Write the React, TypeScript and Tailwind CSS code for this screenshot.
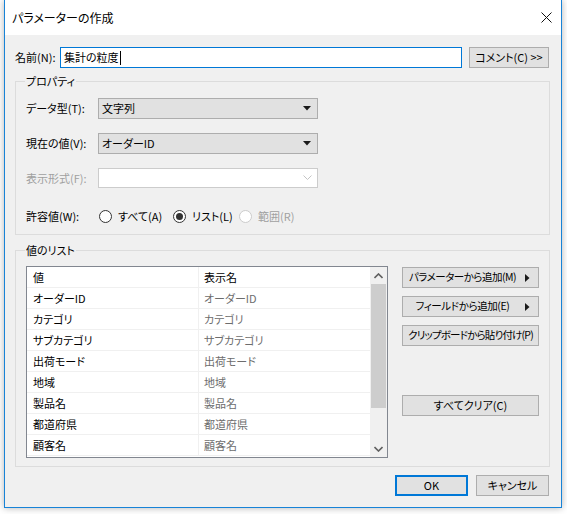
import React from 'react'

const rows = ['オーダーID', 'カテゴリ', 'サブカテゴリ', '出荷モード', '地域', '製品名', '都道府県', '顧客名']

function Combo({ value, disabled }: { value?: string; disabled?: boolean }) {
  return (
    <div
      className={
        disabled
          ? 'flex h-[20px] w-[220px] items-center justify-between border border-[#cccccc] bg-white pl-[3px] pr-[5px]'
          : 'flex h-[21px] w-[220px] items-center justify-between border border-[#adadad] bg-[#e1e1e1] pl-[3px] pr-[6px]'
      }
    >
      <span className="leading-none">{value}</span>
      {disabled ? (
        <svg width="9" height="6" viewBox="0 0 9 6">
          <path d="M0.5 0.5 L4.5 4.5 L8.5 0.5" fill="none" stroke="#c4c4c4" strokeWidth="1" />
        </svg>
      ) : (
        <svg width="8" height="5" viewBox="0 0 8 5">
          <path d="M0 0 H8 L4 4.5 Z" fill="#1a1a1a" />
        </svg>
      )}
    </div>
  )
}

function Radio({ label, checked, disabled }: { label: string; checked?: boolean; disabled?: boolean }) {
  return (
    <div className={`flex items-center gap-[6px] whitespace-nowrap ${disabled ? 'text-[#a0a0a0]' : 'text-black'}`}>
      <span
        className={`flex h-[13px] w-[13px] flex-none items-center justify-center rounded-full border bg-white ${
          disabled ? 'border-[#cccccc]' : 'border-[#333333]'
        }`}
      >
        {checked && <span className="h-[7px] w-[7px] rounded-full bg-[#333333]" />}
      </span>
      <span>{label}</span>
    </div>
  )
}

function Button({
  children,
  arrow,
  className = '',
  textClass = '',
}: {
  children: React.ReactNode
  arrow?: boolean
  className?: string
  textClass?: string
}) {
  return (
    <div
      className={`relative flex h-[21px] items-center justify-center whitespace-nowrap border border-[#adadad] bg-[#e1e1e1] ${
        arrow ? 'pr-[16px]' : ''
      } ${className}`}
    >
      <span className={`leading-none ${textClass}`}>{children}</span>
      {arrow && (
        <svg className="absolute right-[8px] top-[6px]" width="5" height="8" viewBox="0 0 5 8">
          <path d="M0 0 L4.5 4 L0 8 Z" fill="#1a1a1a" />
        </svg>
      )}
    </div>
  )
}

export default function App() {
  return (
    <div className="h-[514px] w-[567px] overflow-hidden bg-white text-[11px] text-black [font-family:'Noto_Sans_CJK_JP','Noto_Sans',sans-serif] [font-feature-settings:'palt']">
      <div className="ml-[4px] flex h-[508px] w-[558px] flex-col border-x border-b border-[#1883d7] bg-[#f0f0f0] shadow-[0_0_7px_rgba(0,0,0,0.3)]">
        {/* title bar */}
        <div className="flex h-[35px] items-center justify-between bg-white pl-[7px] pr-[9px]">
          <span className="text-[12px]">パラメーターの作成</span>
          <svg width="11" height="11" viewBox="0 0 11 11">
            <path d="M0.5 0.5 L10.5 10.5 M10.5 0.5 L0.5 10.5" stroke="#111" strokeWidth="1" />
          </svg>
        </div>

        <div className="flex flex-col pl-[10px] pr-[11px] pt-[12px]">
          {/* name row */}
          <div className="flex h-[21px] items-center">
            <span className="w-[45px] whitespace-nowrap">名前(N):</span>
            <div className="flex h-[21px] w-[402px] items-center border border-[#0078d7] bg-white pl-[3px]">
              <span className="leading-none">集計の粒度</span>
              <span className="ml-[1px] h-[14px] w-px bg-black" />
            </div>
            <Button className="ml-[7px] w-[80px]">コメント(C) &gt;&gt;</Button>
          </div>

          {/* properties */}
          <fieldset className="mt-[5px] border border-[#dcdcdc] pb-[7px]">
            <legend className="ml-[9px] px-[1px] leading-[16px]">プロパティ</legend>
            <div className="mt-[9px] flex flex-col pl-[10px]">
              <div className="flex items-center">
                <span className="w-[72px] whitespace-nowrap">データ型(T):</span>
                <Combo value="文字列" />
              </div>
              <div className="mt-[14px] flex items-center">
                <span className="w-[72px] whitespace-nowrap">現在の値(V):</span>
                <Combo value="オーダーID" />
              </div>
              <div className="mt-[14px] flex items-center">
                <span className="w-[72px] whitespace-nowrap text-[#a0a0a0]">表示形式(F):</span>
                <Combo disabled />
              </div>
              <div className="mt-[18px] flex h-[21px] items-center">
                <span className="w-[73px] flex-none whitespace-nowrap">許容値(W):</span>
                <div className="flex w-[74px] flex-none">
                  <Radio label="すべて(A)" />
                </div>
                <div className="flex w-[66px] flex-none">
                  <Radio label="リスト(L)" checked />
                </div>
                <Radio label="範囲(R)" disabled />
              </div>
            </div>
          </fieldset>

          {/* list of values */}
          <fieldset className="mt-[7px] border border-[#dcdcdc] pb-[8px]">
            <legend className="ml-[9px] px-[1px] leading-[16px]">値のリスト</legend>
            <div className="mt-[8px] flex px-[10px]">
              <div className="flex h-[192px] w-[362px] border border-[#828790] bg-white">
                <div className="flex w-[343px] flex-col">
                  {[['値', '表示名'], ...rows.map((r) => [r, r])].map(([v, d], i) => (
                    <div key={i} className="flex h-[21px] border-b border-[#f0f0f0]">
                      <div className="flex w-[172px] items-center border-r border-[#f0f0f0] pl-[6px]">{v}</div>
                      <div className={`flex flex-1 items-center pl-[5px] ${i === 0 ? 'text-black' : 'text-[#6d6d6d]'}`}>
                        {d}
                      </div>
                    </div>
                  ))}
                </div>
                {/* scrollbar */}
                <div className="flex w-[17px] flex-col items-center bg-[#f0f0f0]">
                  <div className="flex h-[17px] items-center justify-center">
                    <svg width="9" height="6" viewBox="0 0 9 6">
                      <path d="M0.5 5 L4.5 1 L8.5 5" fill="none" stroke="#606060" strokeWidth="1.6" />
                    </svg>
                  </div>
                  <div className="h-[124px] w-[15px] bg-[#cdcdcd]" />
                  <div className="flex-1" />
                  <div className="flex h-[17px] items-center justify-center">
                    <svg width="9" height="6" viewBox="0 0 9 6">
                      <path d="M0.5 1 L4.5 5 L8.5 1" fill="none" stroke="#606060" strokeWidth="1.6" />
                    </svg>
                  </div>
                </div>
              </div>

              <div className="ml-[14px] mt-[1px] flex w-[137px] flex-col">
                <Button arrow textClass="text-[10.5px] tracking-[-0.5px]">
                  パラメーターから追加(M)
                </Button>
                <Button arrow className="mt-[8px]" textClass="text-[10.5px] tracking-[-0.4px]">
                  フィールドから追加(E)
                </Button>
                <Button className="mt-[8px]" textClass="text-[10.5px] tracking-[-0.8px]">
                  クリップボードから貼り付け(P)
                </Button>
                <Button className="mt-[49px]">すべてクリア(C)</Button>
              </div>
            </div>
          </fieldset>

          {/* dialog buttons */}
          <div className="mt-[8px] flex justify-end gap-[8px] pr-[1px]">
            <div className="flex h-[21px] w-[73px] items-center justify-center border-2 border-[#0078d7] bg-[#e1e1e1]">
              OK
            </div>
            <Button className="w-[73px]">キャンセル</Button>
          </div>
        </div>
      </div>
    </div>
  )
}
